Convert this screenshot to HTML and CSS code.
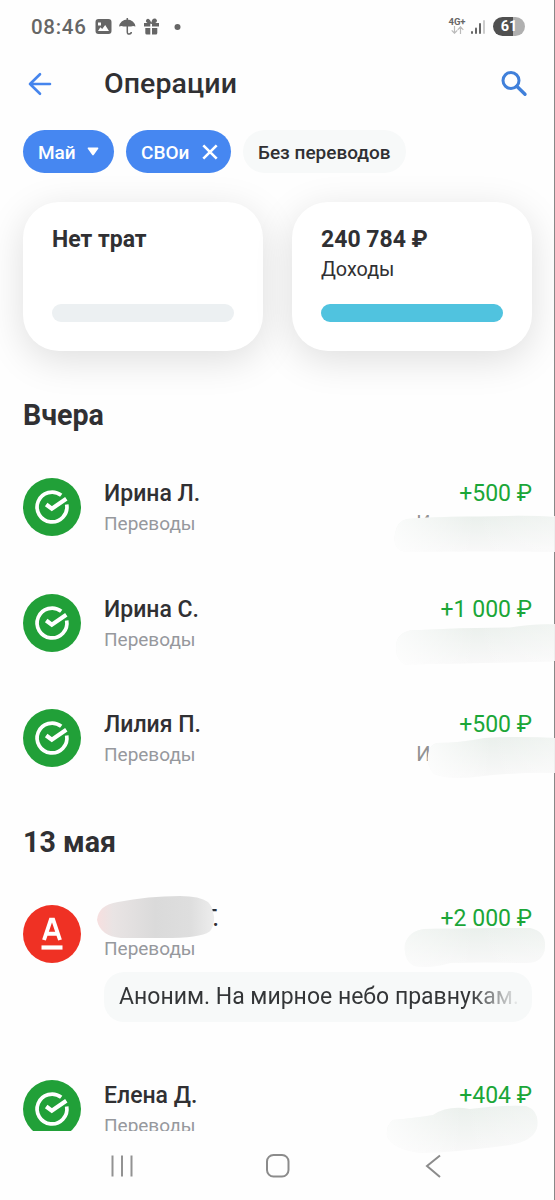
FILE: index.html
```html
<!DOCTYPE html>
<html lang="ru">
<head>
<meta charset="utf-8">
<title>Операции</title>
<link rel="stylesheet" href="styles.css">
</head>
<body>
<svg class="defs" width="0" height="0" aria-hidden="true">
  <defs>
    <symbol id="sber" viewBox="0 0 58 58">
      <circle cx="29" cy="29" r="29" fill="#21a038"/>
      <path d="M38.200 17.300A14.900 14.900 0 1 0 43.700 26.500" fill="none" stroke="#fff" stroke-width="3.700"/>
      <path d="M23.200 26.500l5.600 4.200 14.500-9.900" fill="none" stroke="#fff" stroke-width="4.200"/>
    </symbol>
    <linearGradient id="mist" x1="0" y1="0" x2="0.12" y2="1">
      <stop offset="0" stop-color="#e9efeb"/><stop offset="1" stop-color="#f8f8f8"/>
    </linearGradient>
    <linearGradient id="fade" x1="0" y1="0" x2="1" y2="0">
      <stop offset="0" stop-color="#fff" stop-opacity=".75"/><stop offset=".5" stop-color="#fff" stop-opacity="0"/><stop offset="1" stop-color="#fff" stop-opacity=".3"/>
    </linearGradient>
    <linearGradient id="cloud" x1="0" y1="0" x2="1" y2="0">
      <stop offset="0" stop-color="#f7dfdf"/><stop offset=".14" stop-color="#e9e4e4"/><stop offset=".5" stop-color="#dadada"/><stop offset=".8" stop-color="#dedede"/><stop offset="1" stop-color="#ededed"/>
    </linearGradient>
  </defs>
</svg>
<div class="screen">
  <header class="status">
    <span class="clock">08:46</span>
    <svg class="status-icons" width="90" height="20" viewBox="0 0 90 20">
      <g fill="#666">
        <path fill-rule="evenodd" d="M3.500 2h10a3 3 0 0 1 3 3v9a3 3 0 0 1-3 3h-10a3 3 0 0 1-3-3V5a3 3 0 0 1 3-3zM3 14h11l-3.800-6-3 4-1.800-1.800zM3 5.500v3h3v-3z"/>
        <path d="M24 9.500a8.300 8 0 0 1 16.500 0q-2.500-1.200-4.500 0h-7.500q-2-1.200-4.500 0z"/>
        <path d="M32.300 1v14q0 2.200 2 2t2-2" fill="none" stroke="#666" stroke-width="1.500"/>
        <path d="M49 6h6.300v3.500H49zM57 6h7v3.500h-7zM50.300 11h5v6.500h-3.500a1.500 1.500 0 0 1-1.500-1.500zM57 11h5.300v5a1.500 1.500 0 0 1-1.500 1.500H57z"/>
        <path d="M55.600 6Q50.500 5.500 52 3q2-1.500 3.600 3zM57 6q1-5 3.600-3.500Q63 5 57 6z" stroke="#666" stroke-width="1.500"/>
        <circle cx="82.500" cy="10" r="3"/>
      </g>
    </svg>
    <div class="net"><span>4G+</span>
      <svg width="13" height="8" viewBox="0 0 13 8" fill="none" stroke="#bbb" stroke-width="1.200"><path d="M3.500 0v7M.7 4.300l2.800 2.900 2.800-2.900M9.500 8V1M6.700 3.800l2.800-3 2.800 3"/></svg>
    </div>
    <svg class="bars" width="15" height="16" viewBox="0 0 15 16"><g fill="#666"><rect y="12" width="2" height="3" rx="1"/><rect x="4" y="8.500" width="2" height="6.500" rx="1"/><rect x="8" y="4" width="2" height="11" rx="1"/></g><rect x="12" y="1" width="2" height="14" rx="1" fill="#ccc"/></svg>
    <div class="battery">61</div>
  </header>

  <div class="titlebar">
    <svg class="back" width="24" height="24" viewBox="0 0 24 24" fill="none" stroke="#4685ed" stroke-width="2.600" stroke-linecap="round" stroke-linejoin="round"><path d="M22 12H2M12 2.200L2 12l10 9.800"/></svg>
    <h1>Операции</h1>
    <svg class="search" width="28" height="28" viewBox="0 0 28 28" fill="none" stroke="#4080da"><circle cx="11" cy="10.500" r="8" stroke-width="3"/><path d="M16.800 16.300l8.200 8" stroke-width="3.400" stroke-linecap="round"/></svg>
  </div>

  <nav class="chips">
    <div class="chip blue month"><span>Май</span><svg width="12" height="9" viewBox="0 0 12 9"><path d="M1.200.5h9.600q1 .2.400 1.200L6.700 8q-.7.800-1.400 0L.8 1.700Q.2.700 1.200.5z" fill="#fff"/></svg></div>
    <div class="chip blue own"><span>СВОи</span><svg width="16" height="16" viewBox="0 0 16 16"><path d="M1.300 1.300l13.400 13.400m0-13.400L1.300 14.700" stroke="#fff" stroke-width="2.600"/></svg></div>
    <div class="chip pale"><span>Без переводов</span></div>
  </nav>

  <section class="cards">
    <div class="card"><b>Нет трат</b><i class="meter"></i></div>
    <div class="card"><b class="sum">240 784 ₽</b><span>Доходы</span><i class="meter full"></i></div>
  </section>

  <main class="list">
    <h2 class="yesterday">Вчера</h2>
    <article class="op">
      <svg class="logo" width="58" height="58"><use href="#sber"/></svg>
      <div class="who"><strong>Ирина Л.</strong><small>Переводы</small></div>
      <div class="money"><span>+500 ₽</span><em>И</em></div>
      <svg class="smudge" width="165" height="60" viewBox="390 505 165 60"><path d="M407 519Q440 516 480 516.500Q530 515 555 517V552Q470 551 405 552Q392 549 395 534Q397 521 407 519z" fill="#fefefe"/><path d="M407 519Q440 516 480 516.500Q530 515 555 517V552Q470 551 405 552Q392 549 395 534Q397 521 407 519z" fill="url(#mist)"/><path d="M407 519Q440 516 480 516.500Q530 515 555 517V552Q470 551 405 552Q392 549 395 534Q397 521 407 519z" fill="url(#fade)"/></svg>
    </article>
    <article class="op">
      <svg class="logo" width="58" height="58"><use href="#sber"/></svg>
      <div class="who"><strong>Ирина С.</strong><small>Переводы</small></div>
      <div class="money"><span>+1 000 ₽</span></div>
      <svg class="smudge" width="165" height="60" viewBox="390 620.500 165 60"><path d="M410 630Q460 627 510 627Q538 623 555 624V661Q470 663 405 664Q393 657 397 640Q400 632 410 630z" fill="url(#mist)"/><path d="M410 630Q460 627 510 627Q538 623 555 624V661Q470 663 405 664Q393 657 397 640Q400 632 410 630z" fill="url(#fade)"/></svg>
    </article>
    <article class="op">
      <svg class="logo" width="58" height="58"><use href="#sber"/></svg>
      <div class="who"><strong>Лилия П.</strong><small>Переводы</small></div>
      <div class="money"><span>+500 ₽</span><em>И</em></div>
      <svg class="smudge" width="165" height="60" viewBox="390 736 165 60"><path d="M437 743Q460 743 484 738Q520 736 555 738V773Q515 772 475 777Q450 780 434 774Q425 764 429 751Q431 744 437 743z" fill="url(#mist)"/><path d="M437 743Q460 743 484 738Q520 736 555 738V773Q515 772 475 777Q450 780 434 774Q425 764 429 751Q431 744 437 743z" fill="url(#fade)"/></svg>
    </article>
    <h2 class="may">13 мая</h2>
    <article class="op alfa-op">
      <svg class="logo" width="58" height="58" viewBox="0 0 58 58"><circle cx="29" cy="29" r="29" fill="#ef3124"/><path d="M21 35L27.800 14.800h2.400L37 35M23.500 28.800h11" fill="none" stroke="#fff" stroke-width="3.900"/><path d="M18.500 42.500h21" stroke="#fff" stroke-width="4.200"/></svg>
      <div class="who"><strong class="masked">Г.</strong><small>Переводы</small></div>
      <div class="money"><span>+2 000 ₽</span></div>
      <svg class="smudge" width="165" height="60" viewBox="390 920 165 60"><path d="M424 929Q470 928 500 928H530Q546 931 545 947Q544 962 528 963Q480 962 450 963Q430 969 414 966Q403 960 405 944Q409 931 424 929z" fill="url(#mist)"/><path d="M424 929Q470 928 500 928H530Q546 931 545 947Q544 962 528 963Q480 962 450 963Q430 969 414 966Q403 960 405 944Q409 931 424 929z" fill="url(#fade)" opacity=".65"/></svg>
      <svg class="name-smudge" width="130" height="48" viewBox="90 893 130 48"><path d="M118 902Q148 896 180 896Q200 896 208 902Q212 906 213 912Q216 921 211 930Q206 937 172 938H121Q100 936 97 920Q98 905 118 902z" fill="url(#cloud)"/></svg>
    </article>
    <div class="message"><span>Аноним. На мирное небо правнукам.</span></div>
    <article class="op elena">
      <svg class="logo" width="58" height="58"><use href="#sber"/></svg>
      <div class="who"><strong>Елена Д.</strong><small>Переводы</small></div>
      <div class="money"><span>+404 ₽</span></div>
    </article>
  </main>

  <footer class="navbar">
    <svg class="last-smudge" width="165" height="60" viewBox="380 1098 165 60"><path d="M393 1120Q415 1118 433 1115Q448 1105 470 1109Q500 1105 526 1106Q540 1111 537 1128Q533 1141 510 1145Q460 1152 420 1153Q392 1149 387 1136Q386 1125 393 1120z" fill="url(#mist)"/><path d="M393 1120Q415 1118 433 1115Q448 1105 470 1109Q500 1105 526 1106Q540 1111 537 1128Q533 1141 510 1145Q460 1152 420 1153Q392 1149 387 1136Q386 1125 393 1120z" fill="url(#fade)"/></svg>
    <svg width="24" height="24" viewBox="0 0 24 24"><path d="M2.500 1.500v21M12 1.500v21M21.500 1.500v21" stroke="#929292" stroke-width="2"/></svg>
    <svg width="24" height="24" viewBox="0 0 24 24"><rect x="1" y="1" width="21.500" height="21.500" rx="6.500" fill="none" stroke="#8b8b8b" stroke-width="2"/></svg>
    <svg width="24" height="24" viewBox="0 0 24 24"><path d="M18 1.500L5 12l13 11" fill="none" stroke="#8b8b8b" stroke-width="2"/></svg>
  </footer>
  <div class="edge"></div>
</div>
</body>
</html>
```
FILE: styles.css
```css
* { box-sizing: border-box; }
body { margin: 0; background: #fefefe; color: #303033; font-family: Roboto, sans-serif; }
h1, h2 { margin: 0; white-space: nowrap; }
svg { display: block; flex: none; }
.defs { position: absolute; }
.screen { position: relative; width: 555px; height: 1200px; overflow: hidden; display: flex; flex-direction: column; }

.status { height: 52px; flex: none; display: flex; align-items: center; padding: 1px 30px 0 31px; }
.clock { width: 57px; font: 500 20.5px/24px Roboto, sans-serif; color: #666; letter-spacing: .7px; margin-right: 7px; }
.net { margin-left: auto; margin-top: -2px; width: 20px; display: flex; flex-direction: column; align-items: center; }
.net span { font: 700 9.5px/9px Roboto, sans-serif; color: #666; }
.bars { margin-left: 4px; }
.battery { margin-left: 7px; width: 32px; height: 19px; border-radius: 10px; background: linear-gradient(90deg, #505050 61%, #b0b0b0 61%); color: #fff; font: 700 14.5px/19px Roboto, sans-serif; text-align: center; }

.titlebar { height: 64px; flex: none; display: flex; align-items: center; padding: 0 27px 0 28px; }
.titlebar h1 { font-size: 28.5px; line-height: 36px; font-weight: 500; margin-left: 52px; letter-spacing: .1px; }
.search { margin-left: auto; }

.chips { display: flex; gap: 12px; padding: 14px 23px 0; }
.chip { height: 43px; border-radius: 22px; display: flex; align-items: center; justify-content: space-between; font: 500 19px/24px Roboto, sans-serif; white-space: nowrap; padding: 0 15px; }
.chip span { padding-top: 2px; }
.blue { background: #4687f1; color: #fff; }
.month { width: 91px; }
.own { width: 105px; padding-right: 13px; }
.pale { width: 163px; background: #f7f9f9; }

.cards { display: flex; gap: 29px; padding: 29px 23px 0; }
.card { width: 240px; height: 149px; border-radius: 36px; background: #fff; box-shadow: 0 9px 38px rgba(0, 0, 0, .13); padding: 23px 29px 29px; display: flex; flex-direction: column; }
.card b { font-size: 23px; line-height: 30px; white-space: nowrap; }
.card span { font-size: 19.8px; line-height: 26px; margin-top: 2px; }
.meter { margin-top: auto; height: 18px; border-radius: 9px; background: #ecf0f2; }
.full { background: #50c3df; }

.list { height: 780px; flex: none; overflow: hidden; padding-left: 23px; }
.list h2 { font-size: 28.6px; line-height: 36px; font-weight: 700; }
.yesterday { margin: 46px 0 45px; }
.may { margin: -1px 0 45px; }
.op { position: relative; display: flex; height: 60px; margin-bottom: 55.500px; padding-right: 23px; }
.who { margin-left: 23px; display: flex; flex-direction: column; }
.who strong { font-size: 23px; line-height: 30px; padding-top: 1px; font-weight: 500; white-space: nowrap; }
.who small { font-size: 19px; line-height: 29px; color: #96989d; }
.money { margin-left: auto; display: flex; flex-direction: column; }
.money span { font-size: 23px; line-height: 30px; padding-top: 1px; color: #1ba638; text-align: right; white-space: nowrap; }
.money em { font-size: 20px; line-height: 29px; font-style: normal; color: #929292; margin-left: -43px; }
.smudge { position: absolute; right: 0; top: 27px; }
.alfa-op { margin-bottom: 7px; }
.alfa-op .smudge { top: 15px; }
.alfa-op .who, .alfa-op .money { margin-top: -2px; }
.masked { width: 115px; text-align: right; }
.name-smudge { position: absolute; left: 67px; top: -12px; }
.message { margin: 0 23px 58px 81px; width: 428px; height: 50px; border-radius: 20px; background: #f7f9f9; padding: 0 15px; overflow: hidden; white-space: nowrap; }
.message span { display: block; font-size: 23px; line-height: 50px; color: transparent; background: linear-gradient(90deg, #333537 88%, #f7f9f9 101%); background-clip: text; -webkit-background-clip: text; }

.navbar { position: relative; height: 69px; flex: none; display: flex; justify-content: space-between; align-items: center; padding: 0 109px 0 110px; }
.last-smudge { position: absolute; left: 380px; top: -33px; }
.edge { position: absolute; right: 0; top: 0; width: 1px; height: 1200px; background: linear-gradient(#888 0 516px, #eee 516px 552px, #888 552px 624px, #eee 624px 661px, #888 661px 738px, #eee 738px 773px, #888 773px); }
```
